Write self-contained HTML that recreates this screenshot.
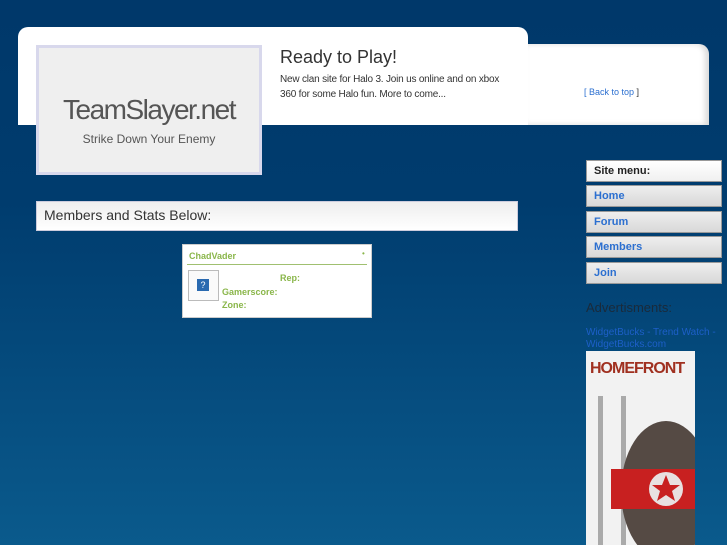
<!DOCTYPE html>
<html><head><style>
body{margin:0;width:727px;height:545px;overflow:hidden;background:linear-gradient(#00386a 0,#003c6e 200px,#0a5a8c 545px);font-family:"Liberation Sans",sans-serif;position:relative}
.a{position:absolute}
</style></head><body>
<div class="a" style="left:18px;top:27px;width:510px;height:98px;background:#fff;border-radius:10px 10px 0 0"></div>
<div class="a" style="left:528px;top:44px;width:181px;height:81px;background:#fff;border-radius:0 10px 0 0;box-shadow:-4px 0 6px rgba(0,0,0,.15) inset"></div>
<div class="a" style="left:36px;top:45px;width:220px;height:124px;background:#efefef;border:3px solid #d8d8ec"></div>
<div class="a" style="left:36px;top:94px;width:226px;text-align:center;font-size:28px;color:#555;letter-spacing:-1.5px">TeamSlayer.net</div>
<div class="a" style="left:36px;top:132px;width:226px;text-align:center;font-size:12px;color:#555">Strike Down Your Enemy</div>
<div class="a" style="left:280px;top:47px;font-size:18px;color:#333">Ready to Play!</div>
<div class="a" style="left:280px;top:72px;width:228px;font-size:10px;line-height:15px;color:#333;letter-spacing:-0.2px">New clan site for Halo 3. Join us online and on xbox 360 for some Halo fun. More to come...</div>
<div class="a" style="left:584px;top:87px;font-size:9px;color:#333"><span style="color:#2b6fd0">[ Back to top </span>]</div>
<div class="a" style="left:36px;top:201px;width:480px;height:28px;background:linear-gradient(#eee,#fff);border:1px solid #ccd"></div>
<div class="a" style="left:44px;top:207px;font-size:14px;color:#333">Members and Stats Below:</div>
<div class="a" style="left:182px;top:244px;width:188px;height:72px;background:#fff;border:1px solid #ccc"></div>
<div class="a" style="left:189px;top:251px;font-size:9px;font-weight:bold;color:#8ab64a">ChadVader</div>
<div class="a" style="left:362px;top:249px;font-size:8px;color:#8ab64a">•</div>
<div class="a" style="left:187px;top:264px;width:180px;height:1px;background:#a0c070"></div>
<div class="a" style="left:188px;top:270px;width:29px;height:29px;border:1px solid #bbb;background:#fafafa"></div>
<div class="a" style="left:197px;top:279px;width:12px;height:12px;background:#2a6ab0;color:#fff;font-size:9px;text-align:center;line-height:12px">?</div>
<div class="a" style="left:222px;top:272px;font-size:9px;font-weight:bold;color:#8ab64a;line-height:13.5px"><span style="padding-left:58px">Rep:</span><br>Gamerscore:<br>Zone:</div>
<div class="a" style="left:586px;top:160px;width:134px;height:20px;background:linear-gradient(#fff,#f0f0f0);border:1px solid #999"></div>
<div class="a" style="left:594px;top:165px;font-size:11px;font-weight:bold;color:#222">Site menu:</div>
<div class="a" style="left:586px;top:185px;width:134px;height:20px;background:linear-gradient(#eee,#d8d8d8);border:1px solid #999"></div>
<div class="a" style="left:586px;top:211px;width:134px;height:20px;background:linear-gradient(#eee,#d8d8d8);border:1px solid #999"></div>
<div class="a" style="left:586px;top:236px;width:134px;height:20px;background:linear-gradient(#eee,#d8d8d8);border:1px solid #999"></div>
<div class="a" style="left:586px;top:262px;width:134px;height:20px;background:linear-gradient(#eee,#d8d8d8);border:1px solid #999"></div>
<div class="a" style="left:594px;top:190px;font-size:11px;font-weight:bold;color:#2b6fd0">Home</div>
<div class="a" style="left:594px;top:216px;font-size:11px;font-weight:bold;color:#2b6fd0">Forum</div>
<div class="a" style="left:594px;top:241px;font-size:11px;font-weight:bold;color:#2b6fd0">Members</div>
<div class="a" style="left:594px;top:267px;font-size:11px;font-weight:bold;color:#2b6fd0">Join</div>
<div class="a" style="left:586px;top:300px;font-size:13px;color:#1a2a3a">Advertisments:</div>
<div class="a" style="left:586px;top:327px;width:140px;font-size:10px;line-height:12px;color:#1d5fc8">WidgetBucks - Trend Watch - WidgetBucks.com</div>
<svg class="a" style="left:586px;top:351px" width="109" height="194">
<rect width="109" height="194" fill="#f2f2f2"/>
<text x="4" y="22" font-family="Liberation Sans" font-weight="bold" font-size="16" fill="#a03020" letter-spacing="-1">HOMEFRONT</text>
<rect x="12" y="45" width="5" height="149" fill="#aaa"/><rect x="35" y="45" width="5" height="149" fill="#aaa"/>
<ellipse cx="80" cy="140" rx="45" ry="70" fill="#554a44"/>
<rect x="25" y="118" width="84" height="40" fill="#c82020"/>
<circle cx="80" cy="138" r="17" fill="#e8e0e0"/>
<path d="M80 124l4 10h10l-8 6 3 10-9-6-9 6 3-10-8-6h10z" fill="#c82020"/>
</svg>
</body></html>
